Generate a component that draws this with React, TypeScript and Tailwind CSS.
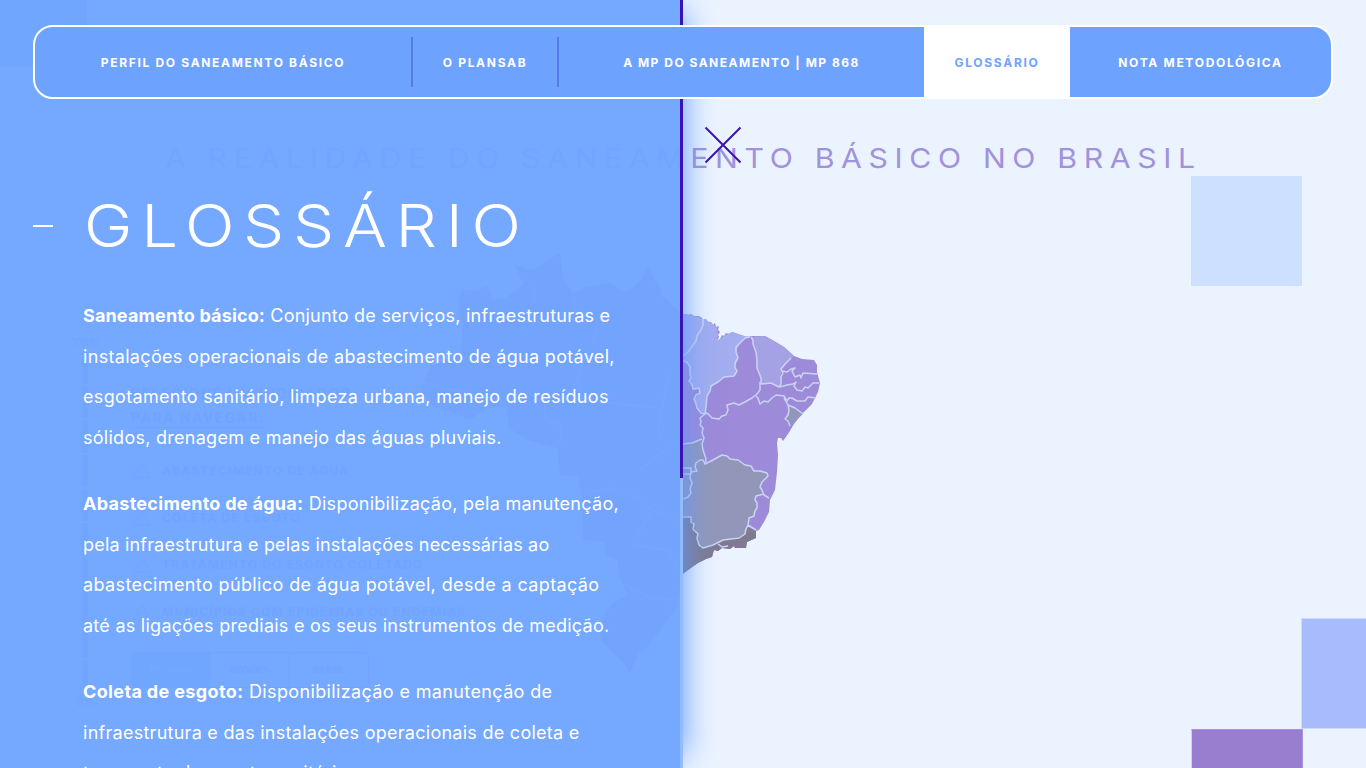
import React from "react";

type NavItem = { label: string; box: string; text: string };

const NAV: NavItem[] = [
  { label: "PERFIL DO SANEAMENTO BÁSICO", box: "w-[378px]", text: "tracking-[1.68px]" },
  { label: "O PLANSAB", box: "w-[146px]", text: "tracking-[1.7px]" },
  { label: "A MP DO SANEAMENTO | MP 868", box: "w-[365px]", text: "tracking-[1.5px]" },
  { label: "GLOSSÁRIO", box: "w-[146px]", text: "tracking-[1.7px]" },
  { label: "NOTA METODOLÓGICA", box: "flex-1", text: "tracking-[1.7px]" },
];

type Line = { strong?: string; strongTrack?: string; text: string; track: string };

const PARAGRAPHS: Line[][] = [
  [
    { strong: "Saneamento básico:", strongTrack: "tracking-[0.14px]", text: " Conjunto de serviços, infraestruturas e", track: "tracking-[0.23px]" },
    { text: "instalações operacionais de abastecimento de água potável,", track: "tracking-[0.32px]" },
    { text: "esgotamento sanitário, limpeza urbana, manejo de resíduos", track: "tracking-[0.33px]" },
    { text: "sólidos, drenagem e manejo das águas pluviais.", track: "tracking-[0.27px]" },
  ],
  [
    { strong: "Abastecimento de água:", strongTrack: "tracking-[0.29px]", text: " Disponibilização, pela manutenção,", track: "tracking-[0.27px]" },
    { text: "pela infraestrutura e pelas instalações necessárias ao", track: "tracking-[0.18px]" },
    { text: "abastecimento público de água potável, desde a captação", track: "tracking-[0.38px]" },
    { text: "até as ligações prediais e os seus instrumentos de medição.", track: "tracking-[0.26px]" },
  ],
  [
    { strong: "Coleta de esgoto:", strongTrack: "tracking-[0.36px]", text: " Disponibilização e manutenção de", track: "tracking-[0.37px]" },
    { text: "infraestrutura e das instalações operacionais de coleta e", track: "tracking-[0.27px]" },
    { text: "transporte de esgoto sanitário.", track: "tracking-[0.29px]" },
  ],
];

const INDICATORS = [
  "ABASTECIMENTO DE ÁGUA",
  "COLETA DE ESGOTO",
  "TRATAMENTO DO ESGOTO COLETADO",
  "MUNICÍPIOS COM EPIDEMIAS OU ENDEMIAS",
];

function BrazilMap() {
  return (
    <svg className="absolute left-[400px] top-[240px]" width="440" height="450" viewBox="400 240 440 450" strokeLinejoin="round">
      <path
        fill="#9d8ad8"
        d="M680 313L684 314 688 315 691 314 694 316 698 316 701 317 703 320 706 319 708 322 711 322 713 325 715 323 716 327 719 326 718 330 720 332 718 335 719 337 717 341 720 339 722 335 724 336 726 333 729 334 732 332 738 334 745 337 752 336 765 336 774 341 784 347 794 356 802 359 814 360 817 365 817 372 820 383 818 392 812 404 802 414 794 424 788 434 783 441 781 438 778 438 777 443 778 455 777 472 775 490 770 500 769 512 764 522 759 530 756 531 756 538 747 542 746 548 735 548 734 546 730 549 722 548 718 551 714 550 712 557 706 559 698 563 690 568 680 576 680 588 678 607 667 620 653 640 647 647 638 655 630 673 624 663 603 643 599 633 602 617 613 603 627 595 618 573 618 560 607 557 603 542 583 540 582 497 578 477 560 475 557 448 527 440 508 427 507 407 487 408 470 420 450 412 433 407 420 390 430 367 460 353 463 327 458 300 462 289 475 291 487 286 493 300 507 297 523 284 515 265 533 270 548 260 560 253 563 277 573 293 587 287 597 286 603 283 613 284 625 292 633 288 641 280 648 265 655 280 660 287 662 296 667 300Z"
      />
      <path fill="#a3adef" d="M680 313L691 315 698 317 706 320 711 323 717 328 718 334 717 341 724 336 732 332 748 337 740 343 736 352 738 358 735 368 736 375 724 378 711 386 707 396 705 414 697 408 694 399 700 393 699 388 695 390 690 384 691 378 689 366 683 361 680 360Z" />
      <path fill="#a4a1e5" d="M751 337L765 336 774 341 784 347 794 356 786 363 781 369 781 377 779 387 771 383 761 384 761 378 757 368 756 352Z" />
      <path fill="#9297b9" d="M680 445L692 443 702 439 703 450 705 464 722 455 730 459 738 460 745 465 751 466 754 470 767 472 768 476 762 482 760 490 764 495 756 496 755 500 757 508 754 516 749 520 748 527 743 536 723 540 705 548 699 545 698 537 693 524 691 516 680 518Z" />
      <path fill="#7f7a91" d="M680 518L691 516 693 524 698 537 699 545 705 548 723 540 743 536 748 527 756 531 756 538 747 542 746 548 735 548 734 546 730 549 722 548 718 551 714 550 712 557 706 559 698 563 680 576Z" />
      <path fill="#9297b9" d="M789 406L803 414 796 420 791 426 786 420 789 415Z" />
      <g fill="none" stroke="#c9d4f5" strokeWidth="1.5">
        <path d="M703 319L703 325 701 330 697 336 696 341 693 345 688 352 683 356" />
        <path d="M683 361L687 362 690 367 690 374 691 378 689 381 692 384 693 389 699 388 700 393 696 395 694 399 696 404 697 408 701 413 705 414" />
        <path d="M750 337L745 338 740 343 736 347 736 352 738 358 735 363 735 368 737 371 734 376 724 377 718 382 711 386 710 391 707 396 706 407 705 414" />
        <path d="M705 414L707 413 712 418 719 419 722 416 726 415 728 410 727 405 734 403 739 405 745 402 752 398 757 394 760 390 760 382" />
        <path d="M751 337L753 340 753 344 756 352 757 360 757 368 761 378 761 384 771 383 775 385 779 387 781 384 781 377 783 373 781 369 786 363 791 358" />
        <path d="M782 371L787 372 791 369 795 368 792 371 795 377 800 375 801 378 803 373 817 374" />
        <path d="M780 387L787 385 793 384 796 382 794 386 797 390 802 391 805 387 808 388 813 383 819 383" />
        <path d="M756 396L758 398 760 404 764 401 768 402 772 398 776 395 784 396 787 401 789 398 792 398 797 401 805 401 808 397 816 398" />
        <path d="M784 398L788 405 795 408 803 414M788 405L789 410 788 415 785 419 788 421 790 426" />
        <path d="M705 414L700 418 701 422 700 425 703 428 702 433 704 438 702 444 703 450 706 459 705 464 713 460 722 455 727 456 730 459 738 460 745 465 751 466 754 471 760 471 767 473 768 476 762 482 760 487 762 490 764 495 769 498" />
        <path d="M764 494L756 496 755 500 757 503 757 508 755 511 754 516 749 518 748 525 756 530M748 525L746 529 745 534 739 538 723 540 713 545 703 548 699 545 697 538 698 534 693 529 694 524 691 522 691 517 683 517" />
        <path d="M683 444L692 443 702 439M705 464L703 460 700 460 696 463 695 467 697 471 691 472 690 478 692 483 690 489 691 493 688 497 683 499M683 468H691V474H683" />
        <path d="M718 544L722 547 728 546" />
      </g>
      <g fill="none" stroke="#bcc9f3" strokeWidth="1.3">
        <path d="M533 283L535 310 520 330M598 330L577 378 582 400 660 408M573 293L575 310 600 325M420 382L500 400 507 407M545 405V420L560 424 561 440 553 447M668 375L658 430 662 440M678 440L640 470M590 492L612 488 634 495 653 510 680 522M653 510L634 540M634 545L668 550 680 572M625 585L650 598 678 600" />
      </g>
    </svg>
  );
}

function IndicatorPanel() {
  return (
    <div className="absolute left-[69px] top-[332px] flex gap-[30px] text-[#6f80ec]">
      <div className="flex w-[32px] flex-col items-center text-[11px] leading-[20px]">
        <span>100%</span>
        <div className="flex h-[340px] w-[6px] flex-col gap-[2px]">
          {[0, 1, 2, 3, 4, 5, 6, 7, 8, 9].map((n) => (
            <span key={n} className="flex-1 bg-[#7b96f5]" />
          ))}
        </div>
        <span>0%</span>
      </div>
      <div className="flex flex-col pt-[50px]">
        <p className="text-[14px] font-bold leading-[24px] tracking-[1.5px]">
          SELECIONE UM INDICADOR
          <br />
          <span className="underline underline-offset-4">PARA NAVEGAR:</span>
        </p>
        <ul className="mt-[17px] text-[12px] font-bold tracking-[1.2px]">
          {INDICATORS.map((label) => (
            <li key={label} className="flex h-[47px] items-center gap-[9px] whitespace-nowrap">
              <svg width="22" height="18" viewBox="0 0 22 18" fill="none" stroke="currentColor">
                <path d="M2 16L11 2l9 14z" />
              </svg>
              {label}
            </li>
          ))}
        </ul>
        <div className="mt-[17px] flex h-[36px] w-[238px] overflow-hidden rounded-[5px] border border-[#6d9cff] text-[9px] font-bold">
          <span className="flex flex-1 items-center justify-center bg-[#8caefa] text-[#d6e5ff]">ESTADOS</span>
          <span className="flex flex-1 items-center justify-center border-r border-[#6d9cff]">REGIÕES</span>
          <span className="flex flex-1 items-center justify-center">BRASIL</span>
        </div>
      </div>
    </div>
  );
}

function Backdrop() {
  return (
    <>
      <div className="absolute left-0 top-0 h-[66px] w-[87px] bg-[#7db0ff]" />
      <div className="absolute left-[1191px] top-[176px] h-[110px] w-[111px] bg-[#cee0ff]" />
      <div className="absolute left-[1301px] top-[618px] h-[111px] w-[66px] border border-[#cbdcff] bg-[#a8bbfd]" />
      <div className="absolute left-[1191px] top-[729px] h-[40px] w-[112px] border border-[#a493da] border-l-[#c9d3f4] bg-[#997dce]" />
      <h2 className="absolute left-[165px] top-[140px] origin-left scale-x-[1.1] whitespace-nowrap text-[27.5px] font-normal leading-[36px] tracking-[6.02px] text-[#a291db]">
        A REALIDADE DO SANEAMENTO BÁSICO NO BRASIL
      </h2>
      <BrazilMap />
      <IndicatorPanel />
    </>
  );
}

export default function App() {
  return (
    <div className="relative h-[768px] w-[1366px] overflow-hidden bg-[#ebf3ff] font-['Inter','Lato',sans-serif] text-white">
      <Backdrop />
      <aside className="absolute left-0 top-0 h-[768px] w-[683px] shadow-[12px_0_30px_-12px_#5c98ff]">
        <div className="flex h-full">
          <section className="flex-1 overflow-hidden bg-[#71a5ff]/97 pl-[33px] pt-[190px]">
            <div className="flex items-center">
              <span className="h-[2px] w-[20px] bg-white" />
              <h1 className="ml-[31px] origin-left scale-x-[1.105] text-[59px] font-light leading-[72px] tracking-[7.9px]">GLOSSÁRIO</h1>
            </div>
            <div className="ml-[50px] mt-[34px] flex flex-col gap-[26px] text-[18px] font-normal leading-[40.5px]">
              {PARAGRAPHS.map((lines, i) => (
                <p key={i}>
                  {lines.map((l) => (
                    <span key={l.text} className={`block whitespace-pre ${l.track}`}>
                      {l.strong && <strong className={`font-bold ${l.strongTrack}`}>{l.strong}</strong>}
                      {l.text}
                    </span>
                  ))}
                </p>
              ))}
            </div>
          </section>
          <div className="flex w-[3px] flex-col bg-[#93bbff]">
            <span className="h-[478px] bg-[#3b13b0]" />
          </div>
        </div>
      </aside>
      <svg className="absolute left-[704px] top-[126px]" width="38" height="38" viewBox="0 0 38 38" stroke="#3b13b0" strokeWidth="2">
        <path d="M1.5 1.5l35 35M36.5 1.5l-35 35" />
      </svg>
      <nav className="absolute left-[33px] top-[25px] flex h-[74px] w-[1300px] items-stretch overflow-hidden rounded-[20px] border-2 border-white bg-[#6ea2ff] text-[12px] font-bold">
        {NAV.map((n, i) => (
          <div key={n.label} className={`flex items-center ${n.box} ${i === 3 ? "bg-white text-[#6ea2ff]" : ""}`}>
            <span className={`flex-1 whitespace-nowrap pt-[2px] text-center ${n.text}`}>{n.label}</span>
            {i < 2 && <span className="h-[50px] w-[2px] bg-[#557aee]" />}
          </div>
        ))}
      </nav>
    </div>
  );
}
